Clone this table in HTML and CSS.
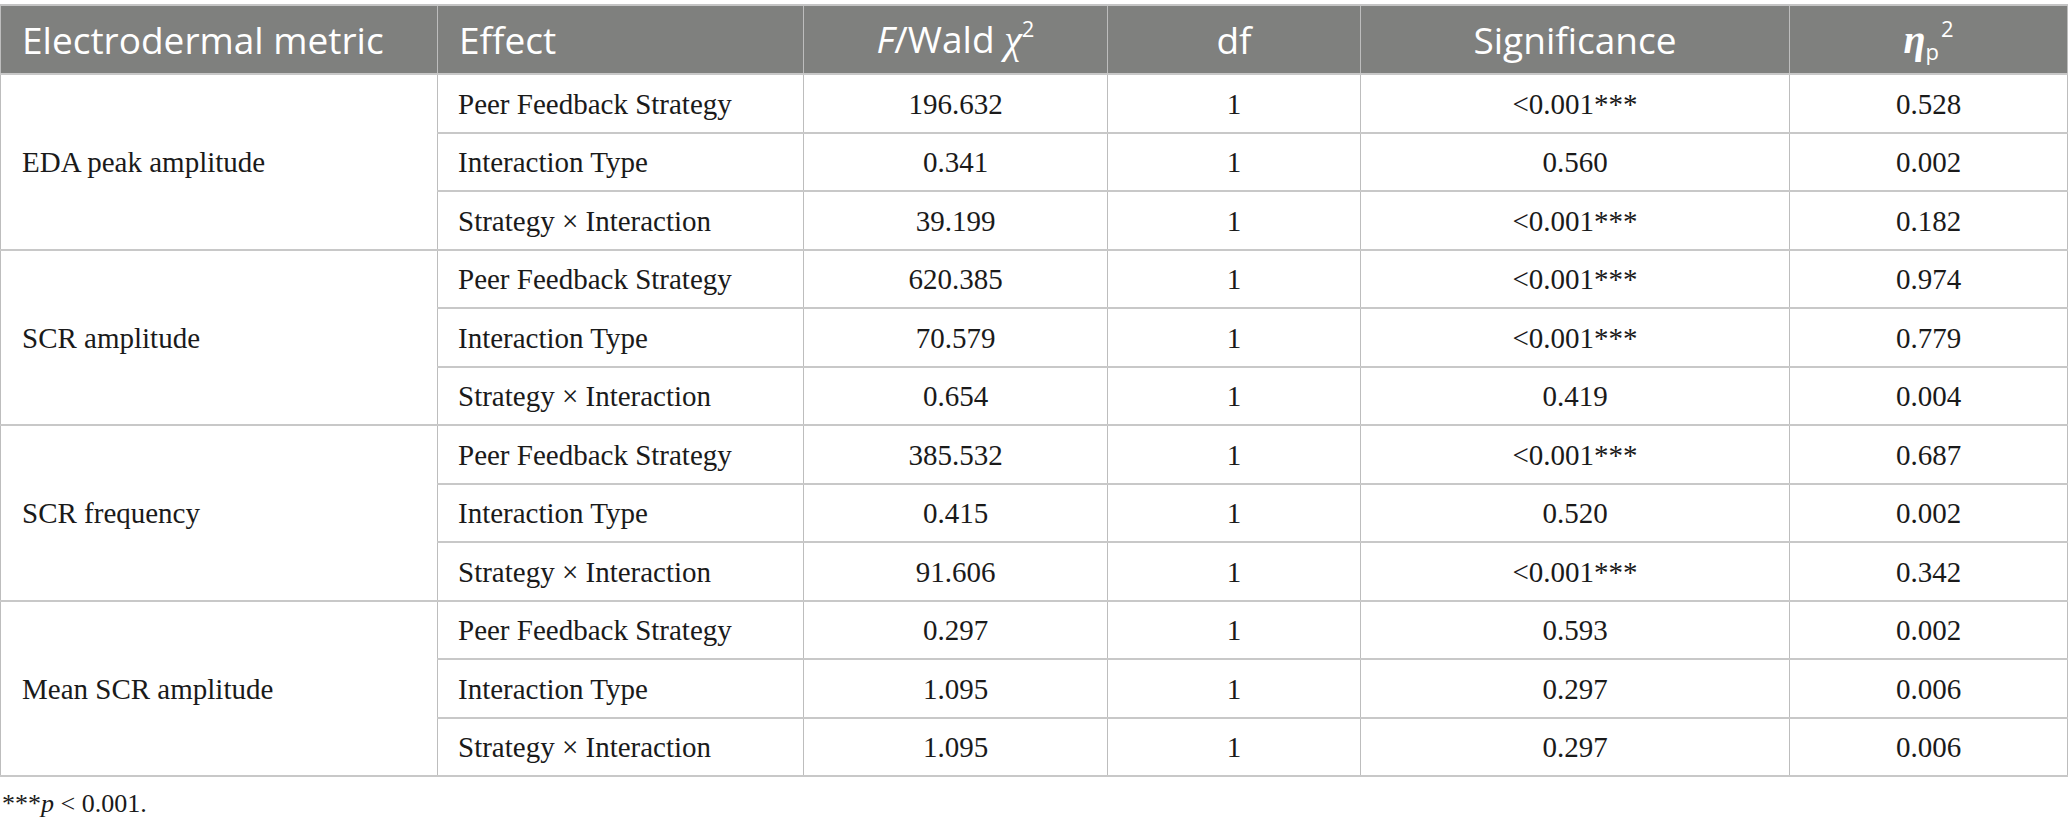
FILE: index.html
```html
<!DOCTYPE html>
<html>
<head>
<meta charset="utf-8">
<link rel="stylesheet" href="styles.css">
</head>
<body>
<div class="wrap">
<table class="stats">
  <colgroup>
    <col class="c1"><col class="c2"><col class="c3"><col class="c4"><col class="c5"><col class="c6">
  </colgroup>
  <thead>
    <tr>
      <th class="left">Electrodermal metric</th>
      <th class="left">Effect</th>
      <th><i>F</i>/Wald <i class="chi">χ</i><sup>2</sup></th>
      <th>df</th>
      <th>Significance</th>
      <th><b class="eta">η</b><sub>p</sub><sup class="sq">2</sup></th>
    </tr>
  </thead>
  <tbody>
    <tr><td rowspan="3" class="metric">EDA peak amplitude</td><td class="effect">Peer Feedback Strategy</td><td>196.632</td><td>1</td><td>&lt;0.001***</td><td>0.528</td></tr>
    <tr><td class="effect">Interaction Type</td><td>0.341</td><td>1</td><td>0.560</td><td>0.002</td></tr>
    <tr><td class="effect">Strategy × Interaction</td><td>39.199</td><td>1</td><td>&lt;0.001***</td><td>0.182</td></tr>

    <tr><td rowspan="3" class="metric">SCR amplitude</td><td class="effect">Peer Feedback Strategy</td><td>620.385</td><td>1</td><td>&lt;0.001***</td><td>0.974</td></tr>
    <tr><td class="effect">Interaction Type</td><td>70.579</td><td>1</td><td>&lt;0.001***</td><td>0.779</td></tr>
    <tr><td class="effect">Strategy × Interaction</td><td>0.654</td><td>1</td><td>0.419</td><td>0.004</td></tr>

    <tr><td rowspan="3" class="metric">SCR frequency</td><td class="effect">Peer Feedback Strategy</td><td>385.532</td><td>1</td><td>&lt;0.001***</td><td>0.687</td></tr>
    <tr><td class="effect">Interaction Type</td><td>0.415</td><td>1</td><td>0.520</td><td>0.002</td></tr>
    <tr><td class="effect">Strategy × Interaction</td><td>91.606</td><td>1</td><td>&lt;0.001***</td><td>0.342</td></tr>

    <tr><td rowspan="3" class="metric">Mean SCR amplitude</td><td class="effect">Peer Feedback Strategy</td><td>0.297</td><td>1</td><td>0.593</td><td>0.002</td></tr>
    <tr><td class="effect">Interaction Type</td><td>1.095</td><td>1</td><td>0.297</td><td>0.006</td></tr>
    <tr><td class="effect">Strategy × Interaction</td><td>1.095</td><td>1</td><td>0.297</td><td>0.006</td></tr>
  </tbody>
</table>
<p class="note">***<i>p</i> &lt; 0.001.</p>
</div>
</body>
</html>
```

FILE: styles.css
```css
html, body {
  margin: 0;
  padding: 0;
  background: #ffffff;
}

.wrap {
  padding-top: 4px;
  width: 2067px;
}

.stats {
  border-collapse: collapse;
  table-layout: fixed;
  width: 2067px;
  font-family: "Liberation Serif", "Times New Roman", serif;
  color: #1a1a1a;
}

.c1 { width: 437px; }
.c2 { width: 366px; }
.c3 { width: 304px; }
.c4 { width: 253px; }
.c5 { width: 429px; }
.c6 { width: 278px; }

.stats th {
  background: #7f807e;
  color: #ffffff;
  font-family: "Open Sans", "Noto Sans", sans-serif;
  font-weight: 400;
  font-size: 37px;
  height: 67px;
  padding: 0 20px;
  text-align: center;
  border: 1px solid #bdbdbd;
  border-top: 2px solid #c4c4c4;
  line-height: 1;
}

.stats th.left {
  text-align: left;
  padding-left: 21px;
}

.stats th i {
  font-style: italic;
}

.stats th .chi {
  font-family: "Liberation Serif", serif;
  font-size: 40px;
}

.stats th sup {
  font-size: 22px;
  vertical-align: 16px;
  line-height: 0;
}

.stats th .eta {
  font-family: "Liberation Serif", serif;
  font-style: italic;
  font-weight: 700;
  font-size: 40px;
}

.stats th sub {
  font-size: 22px;
  vertical-align: -7px;
  line-height: 0;
}

.stats th .sq {
  margin-left: 2px;
}

.stats td {
  height: 58.5px;
  box-sizing: border-box;
  padding: 2px 20px 0;
  font-size: 29px;
  line-height: 1;
  text-align: center;
  border-left: 1px solid #bdbdbd;
  border-right: 1px solid #bdbdbd;
  border-top: 2px solid #c8c8c8;
  border-bottom: 2px solid #c8c8c8;
}

.stats td.metric,
.stats td.effect {
  text-align: left;
}

.stats td.metric {
  padding-left: 21px;
}

.note {
  margin: 12px 0 0 2px;
  font-family: "Liberation Serif", "Times New Roman", serif;
  font-size: 26px;
  color: #1a1a1a;
}
```
